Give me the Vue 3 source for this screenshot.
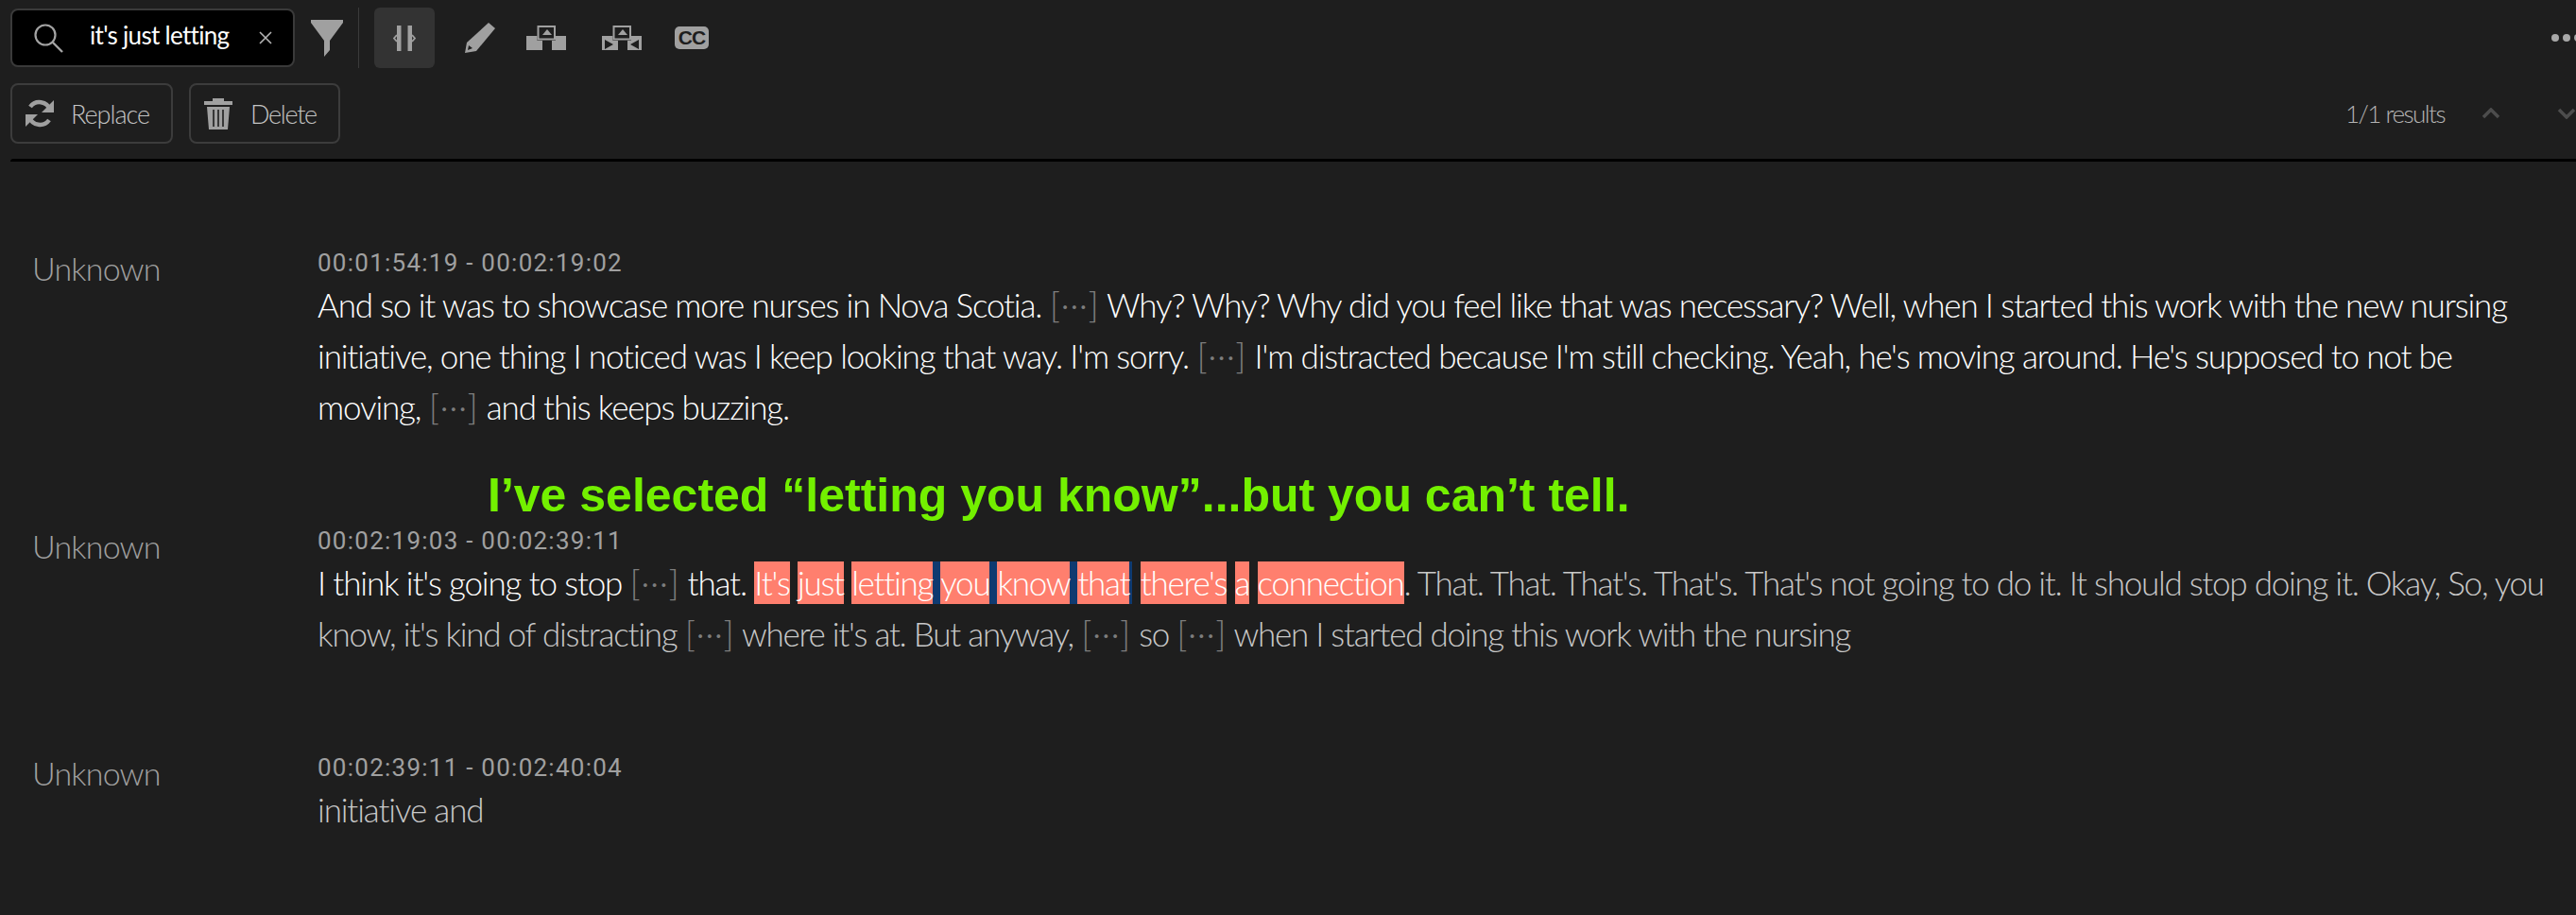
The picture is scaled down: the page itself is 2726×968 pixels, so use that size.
<template>
  <div class="page">
    <div class="toolbar">
      <div class="search">
        <svg class="search-icon" viewBox="0 0 32 31"><circle cx="13" cy="12" r="10.5" fill="none" stroke="#a3a3a3" stroke-width="2.2"/><path d="M20.5 19.5l10.5 10.5" stroke="#a3a3a3" stroke-width="2.4" fill="none"/></svg>
        <span class="search-text">it's just letting</span>
        <svg class="search-x" viewBox="0 0 14 14"><path d="M1 1l12 12M13 1L1 13" stroke="#b5b5b5" stroke-width="1.6" fill="none"/></svg>
      </div>
      <svg class="funnel" viewBox="0 0 34 39"><path d="M0 0H34V3L20 22V32L14 39V22L0 3Z" fill="#a0a0a0"/></svg>
      <div class="divider"></div>
      <div class="tool active">
        <svg class="ic-brace" viewBox="0 0 24 27"><path d="M4 0h4.500v27H4zM15.500 0H20v27h-4.500z" fill="#a0a0a0"/><path d="M4 10l-3 3.500L4 17M20 10l3 3.500L20 17" fill="none" stroke="#a0a0a0" stroke-width="1.800"/></svg>
      </div>
      <div class="tool">
        <svg class="ic-pencil" viewBox="0 0 32 32"><path d="M25 0l7 6-20 24L0 32l2-11z" fill="#a0a0a0"/><path d="M3 29l1-5 4 3z" fill="#1e1e1e"/></svg>
      </div>
      <div class="tool">
        <svg class="ic-lift" viewBox="0 0 42 26"><path d="M0 11h17v15H0zM27 11h15v15H27z" fill="#a0a0a0"/><path d="M11.500 0H31v16H11.500z" fill="#1e1e1e"/><path d="M12.500 1H30v13.500H12.500z" fill="none" stroke="#a0a0a0" stroke-width="2"/><path d="M22 4l5 6H17z" fill="#a0a0a0"/></svg>
      </div>
      <div class="tool">
        <svg class="ic-lift second-lift" viewBox="0 0 42 26"><path d="M0 11h17v15H0zM27 11h15v15H27z" fill="#a0a0a0"/><path d="M11.500 0H31v16H11.500z" fill="#1e1e1e"/><path d="M12.500 1H30v13.500H12.500z" fill="none" stroke="#a0a0a0" stroke-width="2"/><path d="M22 4l5 6H17z" fill="#a0a0a0"/><path d="M3 15l9 5-9 5zM39 15l-9 5 9 5z" fill="#1e1e1e"/></svg>
      </div>
      <div class="tool">
        <div class="cc">CC</div>
      </div>
      <div class="spacer"></div>
      <div class="dots"><i></i><i></i><i></i></div>
    </div>

    <div class="actions">
      <button class="btn replace" type="button">
        <svg class="ic-refresh" viewBox="0 0 32 32"><path d="M27 12A12 12 0 0 0 6 9" fill="none" stroke="#a0a0a0" stroke-width="4.500"/><path d="M31 2v13H18z" fill="#a0a0a0"/><path d="M5 20a12 12 0 0 0 21 3" fill="none" stroke="#a0a0a0" stroke-width="4.500"/><path d="M1 30V17h13z" fill="#a0a0a0"/></svg>
        Replace
      </button>
      <button class="btn delete" type="button">
        <svg class="ic-trash" viewBox="0 0 30 33"><path d="M9 0h12v3h9v4H0V3h9zM3 9h24l-2 24H5z" fill="#a0a0a0"/><path d="M10 12v18M15 12v18M20 12v18" stroke="#1e1e1e" stroke-width="1.600"/></svg>
        Delete
      </button>
      <div class="spacer"></div>
      <span class="results">1/1 results</span>
      <svg class="chev up" viewBox="0 0 20 12"><path d="M2 10l8-8 8 8" fill="none" stroke="#4d4d4d" stroke-width="3.500"/></svg>
      <svg class="chev" viewBox="0 0 20 12"><path d="M2 2l8 8 8-8" fill="none" stroke="#4d4d4d" stroke-width="3.500"/></svg>
    </div>

    <div class="rule"></div>

    <div class="transcript">
      <div class="note">I’ve selected “letting you know”...but you can’t tell.</div>

      <div class="row">
        <div class="speaker">Unknown</div>
        <div class="body">
          <div class="time">00:01:54:19 - 00:02:19:02</div>
          <p class="text">And so it was to showcase more nurses in Nova Scotia. <span class="gap">[···]</span> Why? Why? Why did you feel like that was necessary? Well, when I started this work with the new nursing<br>initiative, one thing I noticed was I keep looking that way. I'm sorry. <span class="gap">[···]</span> I'm distracted because I'm still checking. Yeah, he's moving around. He's supposed to not be<br>moving, <span class="gap">[···]</span> and this keeps buzzing.</p>
        </div>
      </div>

      <div class="row second">
        <div class="speaker">Unknown</div>
        <div class="body">
          <div class="time">00:02:19:03 - 00:02:39:11</div>
          <p class="text">I think it's going to stop <span class="gap">[···]</span> that. <span class="hit">It's</span> <span class="hit">just</span> <span class="hit sel">letting</span><span class="hit sel">you</span><span class="hit sel">know</span><span class="hit end">that</span> <span class="hit">there's</span> <span class="hit">a</span> <span class="hit">connection</span><span class="dim tail">. That. That. That's. That's. That's not going to do it. It should stop doing it. Okay, So, you</span><br><span class="dim tail">know, it's kind of distracting <span class="gap">[···]</span> where it's at. But anyway, <span class="gap">[···]</span> so <span class="gap">[···]</span> when I started doing this work with the nursing</span></p>
        </div>
      </div>

      <div class="row third">
        <div class="speaker">Unknown</div>
        <div class="body">
          <div class="time">00:02:39:11 - 00:02:40:04</div>
          <p class="text dim">initiative and</p>
        </div>
      </div>
    </div>
  </div>
</template>

<script setup>
</script>

<style>
html, body {
  margin: 0;
  background: #1e1e1e;
}
</style>

<style scoped>
.page {
  width: 2726px;
  height: 968px;
  overflow: hidden;
  background: #1e1e1e;
  color: #fff;
  font-family: Lato, "Open Sans", sans-serif;
  font-weight: 300;
}

.toolbar {
  display: flex;
  align-items: center;
  height: 64px;
  padding: 8px 0 0 11px;
}

.search {
  width: 301px;
  height: 62px;
  box-sizing: border-box;
  display: flex;
  align-items: center;
  background: #000;
  border: 2px solid #3a3a3a;
  border-radius: 8px;
  padding: 0 22px 0 22px;
}

.search-icon {
  width: 32px;
  height: 31px;
}

.search-text {
  margin: 0 0 6px 28px;
  flex: 1;
  font-size: 26px;
  font-weight: 400;
  letter-spacing: -0.7px;
  white-space: nowrap;
}

.search-x {
  width: 14px;
  height: 14px;
}

.funnel {
  width: 34px;
  height: 39px;
  margin-left: 17px;
}

.divider {
  width: 1px;
  height: 64px;
  background: #3a3a3a;
  margin: 0 16px;
}

.tool {
  height: 64px;
  display: flex;
  align-items: center;
  justify-content: center;
}

.tool.active {
  width: 64px;
  background: #333;
  border-radius: 6px;
}

.ic-brace {
  width: 24px;
  height: 27px;
}

.ic-pencil {
  width: 32px;
  height: 32px;
  margin-left: 32px;
}

.ic-lift {
  width: 42px;
  height: 26px;
  margin-left: 33px;
}

.second-lift {
  margin-left: 38px;
}

.cc {
  width: 36px;
  height: 24px;
  margin-left: 35px;
  background: #a0a0a0;
  border-radius: 5px;
  color: #1e1e1e;
  font-family: "Liberation Sans", sans-serif;
  font-size: 21px;
  font-weight: 700;
  line-height: 24px;
  text-align: center;
  letter-spacing: -1px;
}

.spacer {
  flex: 1;
}

.dots {
  display: flex;
  gap: 4px;
  width: 26px;
  overflow: hidden;
}

.dots i {
  flex: none;
  width: 8px;
  height: 8px;
  border-radius: 50%;
  background: #a8a8a8;
}

.actions {
  display: flex;
  align-items: center;
  height: 64px;
  margin-top: 16px;
  padding-left: 11px;
}

.btn {
  height: 64px;
  box-sizing: border-box;
  display: flex;
  align-items: center;
  background: transparent;
  border: 2px solid #3c3c3c;
  border-radius: 8px;
  color: #c4c4c4;
  font-family: inherit;
  font-size: 27px;
  font-weight: 300;
  letter-spacing: -1px;
  padding: 0;
}

.replace {
  width: 172px;
  gap: 17px;
  padding-left: 13px;
}

.delete {
  width: 160px;
  gap: 19px;
  padding-left: 14px;
  margin-left: 17px;
  letter-spacing: -1.3px;
}

.ic-refresh {
  width: 32px;
  height: 32px;
}

.ic-trash {
  width: 30px;
  height: 33px;
}

.results {
  color: #b4b4b4;
  font-size: 26px;
  letter-spacing: -1.5px;
  margin-right: 39px;
}

.chev {
  width: 20px;
  height: 12px;
}

.chev.up {
  margin-right: 60px;
}

.rule {
  height: 3px;
  margin: 16px 0 0 11px;
  background: #000;
  border-top-left-radius: 4px;
}

.transcript {
  position: relative;
  padding-top: 90px;
}

.note {
  position: absolute;
  left: 516px;
  top: 324px;
  color: #73f000;
  font-family: "Liberation Sans", sans-serif;
  font-size: 50px;
  font-weight: 700;
  white-space: nowrap;
}

.row {
  display: flex;
}

.second {
  margin-top: 98px;
}

.third {
  margin-top: 98px;
}

.speaker {
  width: 336px;
  padding: 1px 0 0 34px;
  flex: none;
  box-sizing: border-box;
  color: #a0a0a0;
  font-size: 34px;
  letter-spacing: -0.8px;
  line-height: 44px;
}

.time {
  color: #a0a0a0;
  font-family: Roboto, "Liberation Sans", sans-serif;
  font-size: 26px;
  font-weight: 400;
  letter-spacing: 1.25px;
  line-height: 34px;
}

.text {
  margin: 0;
  font-size: 35px;
  line-height: 54px;
  letter-spacing: -1.15px;
  white-space: nowrap;
}

.dim {
  color: #c8c8c8;
}

.tail {
  letter-spacing: -1.25px;
}

.gap {
  color: #7d7d7d;
  font-size: 38px;
  line-height: 1;
  letter-spacing: 0.5px;
}

.hit {
  display: inline-block;
  background: #ff7f6e;
  line-height: 45px;
  letter-spacing: -1.25px;
  color: #fff;
}

.sel {
  border-right: 8px solid #0f3a70;
}

.end {
  border-right: 3px solid #0f3a70;
}
</style>
